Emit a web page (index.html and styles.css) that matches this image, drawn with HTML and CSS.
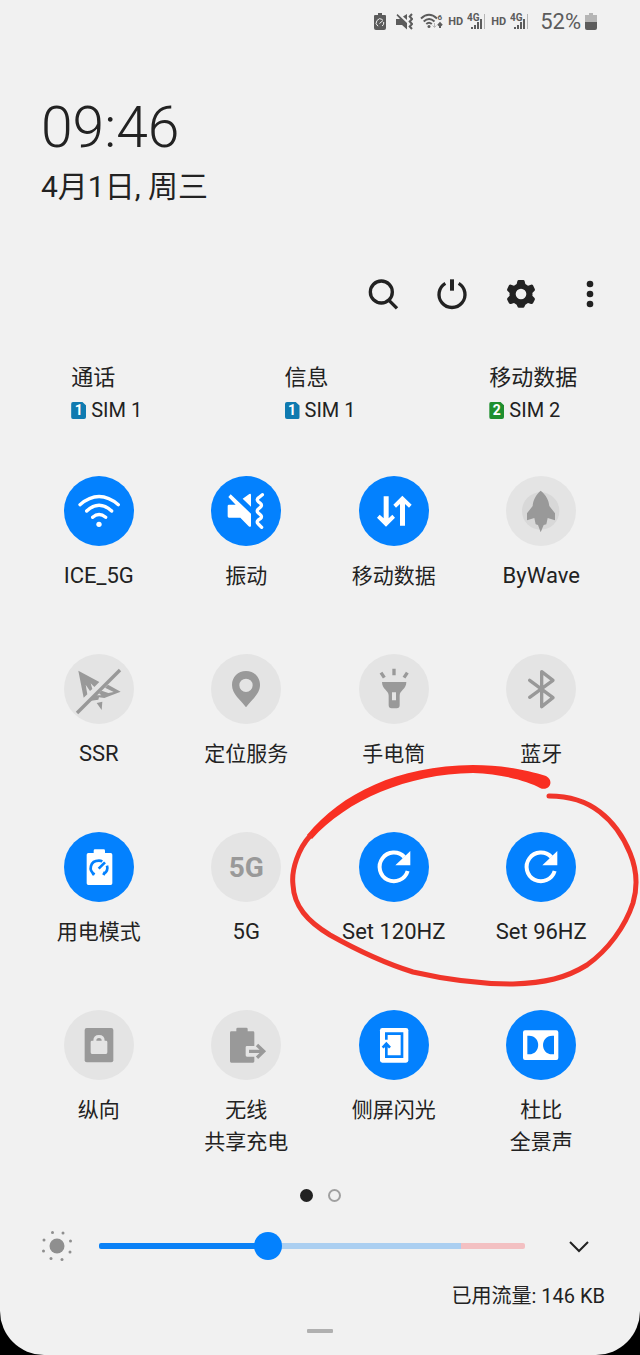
FILE: index.html
```html
<!DOCTYPE html>
<html lang="zh-CN">
<head>
<meta charset="utf-8">
<meta name="viewport" content="width=device-width, initial-scale=1">
<title>快捷设置</title>
<link rel="stylesheet" href="styles.css">
</head>
<body>
<main class="panel">
  <div class="status">
    <svg class="s-saver" viewBox="0 0 12 17"><path fill="currentColor" d="M4 0h4v2h3q1 0 1 1v12q0 2-2 2H2q-2 0-2-2V3q0-1 1-1h3z"/><path class="cut" d="M4 13.200A4 4 0 1 1 8.500 6.500M5.500 10.500L9 7.500M9.700 9a4 4 0 0 1-1.500 4"/></svg>
    <svg class="s-mute" viewBox="0 0 17 17"><path fill="currentColor" d="M1.500 1L11 10v6.500L6 12H0V6h4L.5 2.200zM7 3.500L11 1v6z"/><path class="line" d="M16 1l-2.300 2.500L16 6l-2.300 2.500L16 11l-2.300 2.500L16 16"/></svg>
    <svg class="s-wifi" viewBox="0 0 23 17"><path class="line" d="M1 5.500Q9 -2 17 5.500M3.700 8.500Q9 3.500 14.500 8.500M6.300 11Q9 8.500 11.800 11"/><circle cx="9" cy="13.500" r="1.500" fill="currentColor"/><path class="pale" d="M14.500 10v4M12.700 12.500l1.800 2 1.800-2"/><path class="line" d="M20 15v-4M18 12.500l2-2.200 2 2.200"/><text x="17.500" y="6.500">6</text></svg>
    <span class="hd">HD</span>
    <svg class="s-cell" viewBox="0 0 19 17"><text x="0" y="8">4G</text><path class="bars" d="M5 16v-2M8 16v-4M11 16V9M14 16V6"/><path class="bar-off" d="M17.500 16V1"/></svg>
    <span class="hd">HD</span>
    <svg class="s-cell" viewBox="0 0 19 17"><text x="0" y="8">4G</text><path class="bars" d="M5 16v-2M8 16v-4M11 16V9M14 16V6"/><path class="bar-off" d="M17.500 16V1"/></svg>
    <span class="percent">52%</span>
    <svg class="s-battery" viewBox="0 0 12 17"><path fill="#b5b5b5" d="M4 0h4v2h4v7H0V2h4z"/><path fill="currentColor" d="M0 9h12v6q0 2-2 2H2q-2 0-2-2z"/></svg>
  </div>

  <header class="heading">
    <time class="clock">09:46</time>
    <div class="date">4月1日, 周三</div>
  </header>

  <nav class="toolbar">
    <button type="button" aria-label="搜索"><svg viewBox="0 0 120 120"><circle class="ink" cx="55" cy="54" r="33"/><path class="ink" d="M78 79l24 24"/></svg></button>
    <button type="button" aria-label="电源"><svg viewBox="0 0 120 120"><path class="ink" d="M40 28a39 39 0 1 0 40 0"/><path class="ink wide" d="M60 16v34"/></svg></button>
    <button type="button" aria-label="设置"><svg viewBox="0 0 120 120"><path class="solid" fill-rule="evenodd" d="M53 18h14q3 0 4 4l2 8 8 5 9-3q4-1 6 2l5 10q2 4-1 7l-6 6q1 4 0 8l6 6q3 3 1 7l-5 10q-2 3-6 2l-9-3-8 5-2 5q-1 4-4 4H53q-3 0-4-4l-2-5-8-5-9 3q-4 1-6-2l-5-10q-2-4 1-7l6-6q-1-4 0-8l-6-6q-3-3-1-7l5-10q2-3 6-2l9 3 8-5 2-8q1-4 4-4zM60 44a16 16 0 1 0 0 32a16 16 0 1 0 0-32z"/></svg></button>
    <button type="button" aria-label="更多"><svg viewBox="0 0 120 120"><g class="solid"><circle cx="60" cy="30" r="10"/><circle cx="60" cy="60" r="10"/><circle cx="60" cy="90" r="10"/></g></svg></button>
  </nav>

  <section class="sims">
    <div class="sim"><span>通话</span><span class="sim-line"><b class="badge">1</b>SIM 1</span></div>
    <div class="sim"><span>信息</span><span class="sim-line"><b class="badge">1</b>SIM 1</span></div>
    <div class="sim"><span>移动数据</span><span class="sim-line"><b class="badge green">2</b>SIM 2</span></div>
  </section>

  <section class="tiles">
    <button type="button" class="tile on" aria-pressed="true"><span class="disc"><svg viewBox="69 33 210 210"><g class="stroke"><path d="M117 119Q174 70 232 119M137 138Q174 103 212 138M155 157Q174 140 194 157"/></g><circle class="fill" cx="174" cy="178" r="8"/></svg></span><span class="label latin">ICE_5G</span></button>
    <button type="button" class="tile on" aria-pressed="true"><span class="disc"><svg viewBox="512 33 210 210"><path class="fill" d="M571 88L632 146V182Q631 188 625 184L600 158H566Q562 158 562 154V123Q562 119 566 119H586L564 96ZM607 101L627 87Q632 85 632 90V125Z"/><path class="stroke" d="M666 89L655 98Q647 104 654 110L660 115Q667 121 660 127L654 132Q647 138 654 144L660 149Q667 155 660 161L654 165Q647 171 654 177L664 187"/></svg></span><span class="label">振动</span></button>
    <button type="button" class="tile on" aria-pressed="true"><span class="disc"><svg viewBox="54 33 210 210"><path class="fill" d="M128 94h15v66l11-11 8 9-27 27-27-27 8-9 12 11zM177 182h15v-65l12 11 8-9-28-27-27 27 8 9 12-11z"/></svg></span><span class="label">移动数据</span></button>
    <button type="button" class="tile" aria-pressed="false"><span class="disc"><svg viewBox="498 33 210 210"><circle class="halo" cx="602" cy="138" r="56"/><path class="fill" d="M602 77C588 88 579 106 578 123L561 145V166L583 159 587 178 594 180 602 202 611 180 619 178 623 159 645 166V145L628 123C627 106 617 88 602 77Z"/></svg></span><span class="label latin">ByWave</span></button>

    <button type="button" class="tile" aria-pressed="false"><span class="disc"><svg viewBox="69 27 210 210"><path class="fill" d="M112 77L175 111 160 126 149 115 154 132 147 138 134 119 139 148 128 158ZM201 119L239 140 190 159 174 157 172 164 145 168 160 151 181 151 174 145 182 137 202 144 218 141 192 128ZM167 174L184 170 182 195Z"/><path class="stroke butt" d="M108 204L237 75"/></svg></span><span class="label latin">SSR</span></button>
    <button type="button" class="tile" aria-pressed="false"><span class="disc"><svg viewBox="512 27 210 210"><path class="fill" fill-rule="evenodd" d="M617 78C593 78 575 96 575 120C575 147 600 164 617 187C634 164 659 147 659 120C659 96 641 78 617 78ZM617 101a20 20 0 1 1 0 40a20 20 0 1 1 0-40z"/></svg></span><span class="label">定位服务</span></button>
    <button type="button" class="tile" aria-pressed="false"><span class="disc"><svg viewBox="234 27 210 210"><path class="fill" fill-rule="evenodd" d="M303 111H376C376 133 356 136 356 152V181Q356 190 347 190H332Q323 190 323 181V152C323 136 303 133 303 111ZM333 142V166H345V142Z"/><path class="stroke butt" d="M339 71V91M300 83L310 98M379 83L369 98"/></svg></span><span class="label">手电筒</span></button>
    <button type="button" class="tile" aria-pressed="false"><span class="disc"><svg viewBox="677 27 210 210"><path class="stroke" d="M748 106L818 158 784 185V80L818 106 748 157"/></svg></span><span class="label">蓝牙</span></button>

    <button type="button" class="tile on" aria-pressed="true"><span class="disc"><svg viewBox="69 23 210 210"><path class="fill" d="M158 79q0-4 4-4h26q4 0 4 4v7h17q5 0 5 5v86q0 5-5 5H142q-5 0-5-5V91q0-5 5-5h16z"/><path class="inner" d="M161 150C141 139 147 109 174 109Q180 109 184 111M198 124Q203 140 187 150M154 144L158 152M192 143L187 152M173 133L192 114"/></svg></span><span class="label">用电模式</span></button>
    <button type="button" class="tile" aria-pressed="false"><span class="disc"><span class="glyph">5G</span></span><span class="label latin">5G</span></button>
    <button type="button" class="tile on" aria-pressed="true"><span class="disc"><svg viewBox="234 38 210 210"><path class="stroke thick" d="M380 155A43 43 0 1 1 370 113"/><path class="fill" d="M388 95V138H343Z"/></svg></span><span class="label latin">Set 120HZ</span></button>
    <button type="button" class="tile on" aria-pressed="true"><span class="disc"><svg viewBox="234 38 210 210"><path class="stroke thick" d="M380 155A43 43 0 1 1 370 113"/><path class="fill" d="M388 95V138H343Z"/></svg></span><span class="label latin">Set 96HZ</span></button>

    <button type="button" class="tile" aria-pressed="false"><span class="disc"><svg viewBox="0 0 210 210"><rect class="fill" x="62" y="54" width="86" height="103" rx="6"/><path class="back" fill-rule="evenodd" d="M84 92H88Q88 75 105 75T122 92H126Q130 92 130 96V127Q130 132 126 132H84Q80 132 80 127V96Q80 92 84 92ZM97 92H113Q113 84 105 84T97 92Z"/></svg></span><span class="label">纵向</span></button>
    <button type="button" class="tile" aria-pressed="false"><span class="disc"><svg viewBox="0 0 210 210"><path class="fill" d="M76 57q0-4 4-4h26q4 0 4 4v7h16q4 0 4 4v40h-22q-4 0-4 4v24q0 4 4 4h22v14q0 4-4 4H61q-4 0-4-4V68q0-4 4-4h15z"/><path class="stroke butt" d="M114 124H157M138 105L158 124 138 143"/></svg></span><span class="label">无线<br>共享充电</span></button>
    <button type="button" class="tile on" aria-pressed="true"><span class="disc"><svg viewBox="0 0 210 210"><rect class="fill" x="63" y="54" width="85" height="104" rx="7"/><path class="inner" d="M82 89V71H129V140H82V101M71 113L82 101 93 113"/></svg></span><span class="label">侧屏闪光</span></button>
    <button type="button" class="tile on" aria-pressed="true"><span class="disc"><svg viewBox="0 0 210 210"><path class="fill" fill-rule="evenodd" d="M57 61H151Q157 61 157 67V144Q157 150 151 150H57Q51 150 51 144V67Q51 61 57 61ZM64 77V133H69C106 133 106 77 69 77ZM144 77H139C102 77 102 133 139 133H144Z"/></svg></span><span class="label">杜比<br>全景声</span></button>
  </section>

  <div class="pager"><i class="dot current"></i><i class="dot"></i></div>

  <div class="brightness">
    <svg class="sun" viewBox="0 0 32 32"><g fill="#8f8f8f"><circle cx="16" cy="16" r="7.500"/><circle cx="11.500" cy="2.500" r="1.500"/><circle cx="22" cy="3" r="1.500"/><circle cx="29.500" cy="11" r="1.500"/><circle cx="29" cy="22" r="1.500"/><circle cx="21" cy="29.500" r="1.500"/><circle cx="10" cy="28.500" r="1.500"/><circle cx="2.500" cy="21" r="1.500"/><circle cx="3" cy="10" r="1.500"/></g></svg>
    <input class="slider" type="range" min="0" max="100" value="39" aria-label="亮度">
    <button type="button" class="expand" aria-label="展开"><svg viewBox="0 0 24 24"><path d="M3 8l9 9 9-9"/></svg></button>
  </div>

  <p class="usage">已用流量: 146 KB</p>
  <div class="handle"></div>

  <svg class="marker" viewBox="0 0 350 226" aria-hidden="true">
    <path fill="#f92f22" d="M17 74C52 32 107 5 183 4C212 4 238 9 256 15C265 20 259 31 250 27C238 20 212 13 183 12C117 13 57 39 22 78Z"/>
    <path class="pen" d="M20 75C9 87 1 108 3 124C4 145 17 160 40 174C65 188 94 202 123 211C158 219 192 223 223 223C255 222 276 217 297 204C318 189 335 166 343 142C348 125 347 109 340 92C333 75 323 61 310 51C296 40 278 35 259 35"/>
  </svg>
</main>
</body>
</html>
```
FILE: styles.css
```css
* { box-sizing: border-box; }

body {
  margin: 0;
  background: #000;
  color: #222;
  font-family: Roboto, "Noto Sans CJK SC", sans-serif;
}

button {
  padding: 0;
  border: 0;
  background: none;
  color: inherit;
  font: inherit;
}

svg { display: block; }

.panel {
  position: relative;
  min-height: 100vh;
  padding-bottom: 22px;
  background: #f1f1f1;
  border-radius: 0 0 44px 44px;
  overflow: hidden;
}

/* Status bar */
.status {
  display: flex;
  justify-content: flex-end;
  align-items: center;
  gap: 4px;
  height: 42px;
  padding-right: 43px;
  color: #5c5c5c;
}
.status svg { height: 17px; }
.status text { font-size: 10px; font-weight: 700; fill: currentColor; }
.status .s-wifi text { font-size: 8px; }
.s-saver { width: 12px; margin-right: 6px; }
.s-mute { width: 17px; margin-right: 3px; }
.s-wifi { width: 23px; margin-right: 1px; }
.s-cell { width: 19px; margin-right: 1px; }
.s-battery { width: 12px; }
.line, .cut, .pale, .bars, .bar-off { fill: none; stroke: currentColor; stroke-width: 2; }
.cut { stroke: #f1f1f1; stroke-width: 1; }
.pale { stroke: #b5b5b5; stroke-width: 1; }
.bar-off { stroke: #b5b5b5; stroke-width: 1; }
.hd { font-size: 11px; font-weight: 700; }
.percent { margin-left: 6px; font-size: 22px; }

/* Clock and date */
.heading { padding: 54px 41px 0; }
.clock {
  display: block;
  font-size: 57px;
  font-weight: 300;
  line-height: 64px;
}
.date {
  margin-top: 7px;
  font-size: 30px;
  line-height: 40px;
}

/* Toolbar */
.toolbar {
  display: flex;
  justify-content: flex-end;
  gap: 29px;
  margin-top: 67px;
  padding-right: 30px;
}
.toolbar svg { width: 40px; height: 40px; }
.ink { fill: none; stroke: #222; stroke-width: 10; }
.wide { stroke-width: 12; }
.solid { fill: #222; }

/* SIM assignment */
.sims {
  display: grid;
  grid-template-columns: repeat(3, 1fr);
  justify-items: center;
  margin-top: 47px;
  font-size: 22px;
  line-height: 33px;
}
.sim { display: flex; flex-direction: column; }
.sim-line { display: flex; align-items: center; gap: 5px; font-size: 20px; }
.badge {
  width: 15px;
  height: 17px;
  background: #0f7ab0;
  color: #fff;
  font-size: 14px;
  line-height: 17px;
  text-align: center;
  border-radius: 2px;
  clip-path: polygon(0 0, 75% 0, 100% 20%, 100% 100%, 0 100%);
}
.badge.green { background: #1f8f2f; }

/* Quick setting tiles */
.tiles {
  display: grid;
  grid-template-columns: repeat(4, 1fr);
  row-gap: 62px;
  margin-top: 49px;
  padding: 0 25px;
}
.tile {
  display: flex;
  flex-direction: column;
  align-items: center;
  gap: 14px;
  --disc: #e4e4e4;
  --icon: #999;
}
.tile.on { --disc: #0381fe; --icon: #fff; }
.disc {
  display: grid;
  place-items: center;
  width: 70px;
  height: 70px;
  border-radius: 50%;
  background: var(--disc);
  color: var(--icon);
}
.disc svg { width: 70px; height: 70px; }
.label { font-size: 21px; line-height: 32px; white-space: nowrap; }
.label.latin { font-size: 22px; }
.glyph { font-size: 28px; font-weight: 700; }
.fill { fill: var(--icon); }
.back { fill: var(--disc); }
.halo { fill: #d8d8d8; }
.stroke {
  fill: none;
  stroke: var(--icon);
  stroke-width: 10;
  stroke-linecap: round;
  stroke-linejoin: round;
}
.butt { stroke-linecap: butt; stroke-linejoin: miter; }
.thick { stroke-width: 12; stroke-linecap: butt; }
.inner { fill: none; stroke: var(--disc); stroke-width: 8; }

/* Page dots */
.pager { display: flex; justify-content: center; gap: 15px; margin-top: 31px; }
.dot {
  width: 13px;
  height: 13px;
  border: 2px solid #a0a0a0;
  border-radius: 50%;
}
.dot.current { border-color: #222; background: #222; }

/* Brightness */
.brightness {
  display: flex;
  align-items: center;
  height: 40px;
  margin-top: 24px;
  padding: 0 49px 0 41px;
}
.sun { width: 32px; height: 32px; }
.slider {
  flex: 1;
  min-width: 0;
  height: 28px;
  margin: 0 42px 0 26px;
  appearance: none;
  background: none;
}
.slider::-webkit-slider-runnable-track {
  height: 6px;
  border-radius: 2px;
  background: linear-gradient(90deg, #0a81f6 40%, #abcff1 40% 85%, #f3c0c2 85%);
}
.slider::-webkit-slider-thumb {
  appearance: none;
  width: 28px;
  height: 28px;
  margin-top: -11px;
  border-radius: 50%;
  background: #0381fe;
}
.expand svg { width: 24px; height: 24px; fill: none; stroke: #222; stroke-width: 2; }

.usage {
  margin: 14px 35px 0;
  font-size: 20px;
  line-height: 32px;
  text-align: right;
}
.handle { width: 26px; height: 4px; margin: 17px auto 0; border-radius: 1px; background: #b0b0b0; }

/* Hand-drawn ring over the refresh-rate tiles */
.marker {
  position: absolute;
  top: 761px;
  right: 0;
  width: 350px;
  height: 226px;
  pointer-events: none;
}
.pen { fill: none; stroke: #f0352a; stroke-width: 5; stroke-linecap: round; }
```
